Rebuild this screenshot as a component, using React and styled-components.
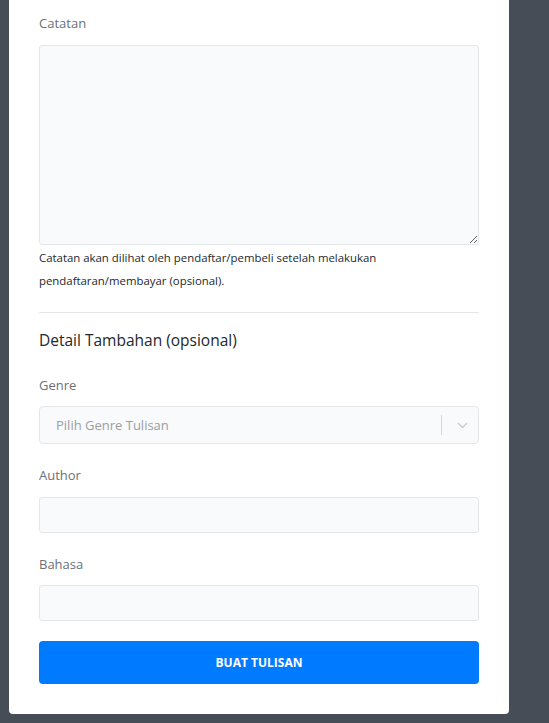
import React from 'react'
import styled, { createGlobalStyle } from 'styled-components'

const GlobalStyle = createGlobalStyle`
  html, body {
    margin: 0;
    padding: 0;
    background: #474d56;
  }
  body {
    font-family: 'Open Sans', 'Noto Sans', sans-serif;
  }
  * {
    box-sizing: border-box;
  }
`

const Page = styled.div`
  padding: 0 40px 10px 9px;
`

const Card = styled.div`
  width: 500px;
  background: #fff;
  border-radius: 0 0 4px 4px;
  padding: 13px 30px 30px;
`

const Group = styled.div`
  margin-bottom: ${props => props.gap ?? 20}px;
`

const Label = styled.label`
  display: block;
  font-size: 13px;
  color: #6b7077;
  margin-bottom: ${props => props.space || 12}px;
  line-height: 20px;
`

const TextArea = styled.textarea`
  display: block;
  width: 100%;
  height: 200px;
  background: #f9fafb;
  border: 1px solid #e4e7ea;
  border-radius: 3px;
  resize: vertical;
  margin: 0;
`

const Help = styled.p`
  margin: 1px 0 0;
  font-size: 11.4px;
  line-height: 23px;
  color: #23282c;
`

const Divider = styled.hr`
  border: none;
  border-top: 1px solid #e5e6e8;
  margin: 20px 0 15px;
`

const Heading = styled.h5`
  margin: 0 0 23px;
  font-size: 15.5px;
  font-weight: 400;
  color: #23282c;
  line-height: 24px;
`

const Input = styled.input`
  display: block;
  width: 100%;
  height: 36px;
  background: #f9fafb;
  border: 1px solid #e4e7ea;
  border-radius: 3px;
  margin: 0;
`

const Select = styled.div`
  display: flex;
  align-items: center;
  height: 38px;
  background: #f9fafb;
  border: 1px solid #e4e7ea;
  border-radius: 4px;
  padding-left: 16px;
`

const Placeholder = styled.span`
  flex: 1;
  font-size: 13px;
  color: #9a9ea3;
`

const Sep = styled.span`
  width: 1px;
  height: 20px;
  background: #d6d9dc;
`

const Arrow = styled.span`
  display: flex;
  align-items: center;
  justify-content: center;
  width: 36px;
  padding-left: 5px;
  color: #c8cbce;
`

const Button = styled.button`
  display: block;
  width: 100%;
  height: 43px;
  margin-top: 20px;
  background: #007bff;
  border: none;
  border-radius: 4px;
  color: #fff;
  font-family: inherit;
  font-size: 12px;
  font-weight: 700;
`

export default function App() {
  return (
    <Page>
      <GlobalStyle />
      <Card>
        <Label>Catatan</Label>
        <TextArea />
        <Help>
          Catatan akan dilihat oleh pendaftar/pembeli setelah melakukan
          pendaftaran/membayar (opsional).
        </Help>
        <Divider />
        <Heading>Detail Tambahan (opsional)</Heading>
        <Group gap={21}>
          <Label space={11}>Genre</Label>
          <Select>
            <Placeholder>Pilih Genre Tulisan</Placeholder>
            <Sep />
            <Arrow>
              <svg width="11" height="7" viewBox="0 0 11 7" fill="none" stroke="currentColor" strokeWidth="1.4">
                <polyline points="1,1 5.5,5.5 10,1" />
              </svg>
            </Arrow>
          </Select>
        </Group>
        <Group gap={21}>
          <Label>Author</Label>
          <Input />
        </Group>
        <Group gap={0}>
          <Label space={11}>Bahasa</Label>
          <Input />
        </Group>
        <Button>BUAT TULISAN</Button>
      </Card>
    </Page>
  )
}
